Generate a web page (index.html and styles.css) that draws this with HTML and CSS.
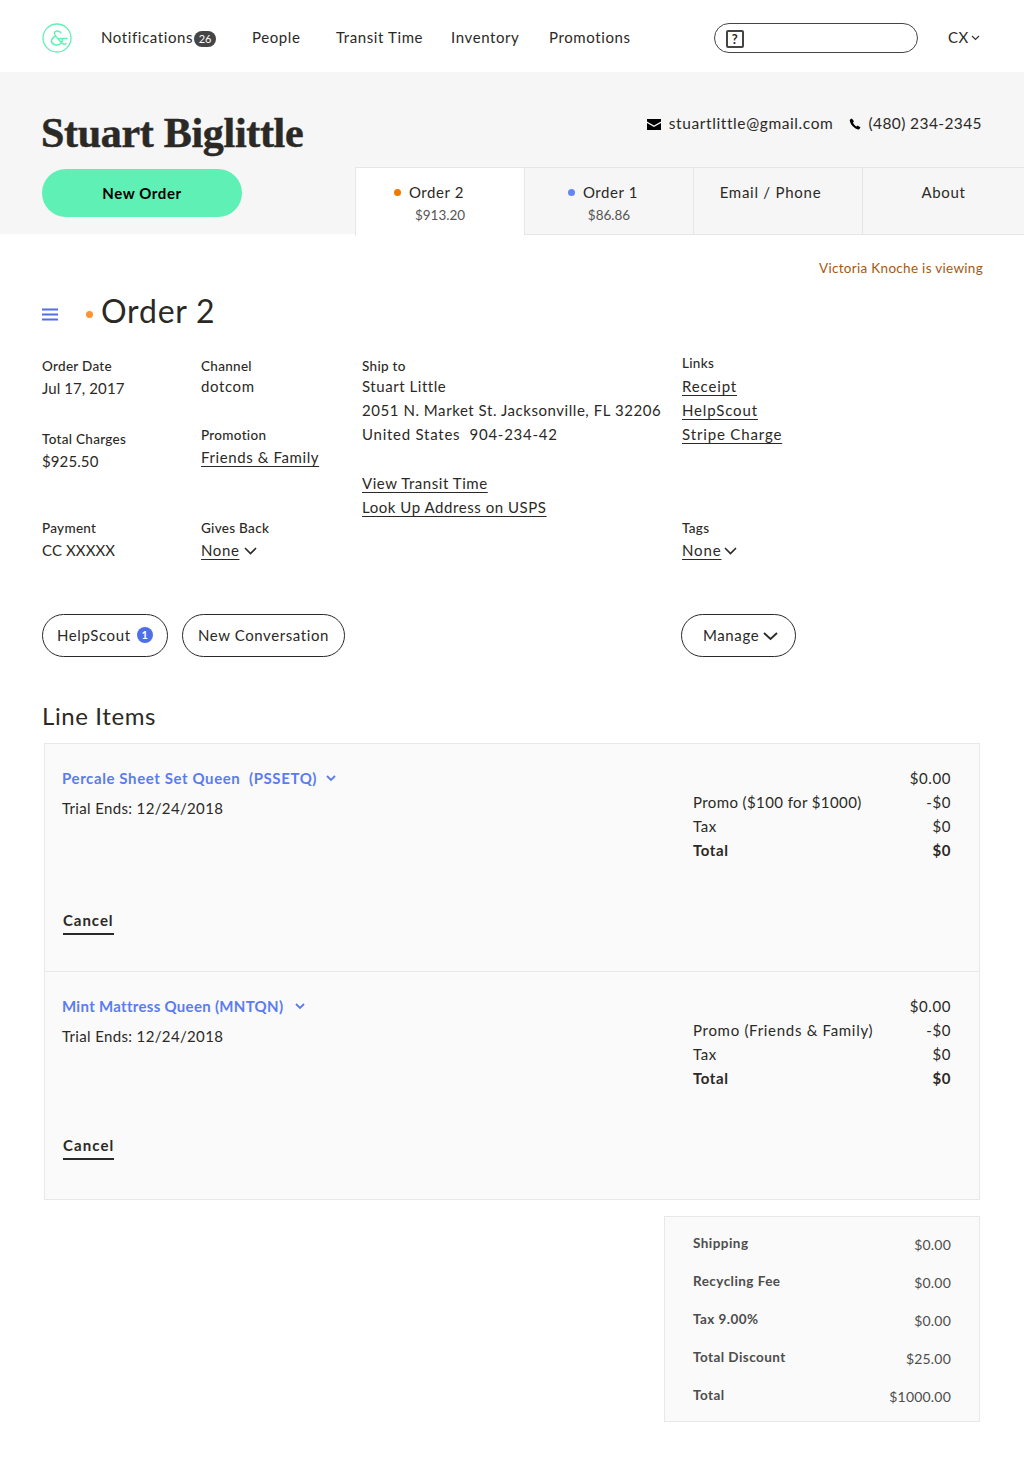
FILE: index.html
```html
<!DOCTYPE html>
<html lang="en">
<head>
    <meta charset="UTF-8">
    <title>Stuart Biglittle</title>
    <link rel="stylesheet" href="styles.css">
</head>
<body>
    <header class="topbar">
        <svg class="logo" width="30" height="30" viewBox="0 0 30 30">
            <circle cx="15" cy="15" r="14" fill="none" stroke="#5ff0b5" stroke-width="1.3"/>
            <path d="M19 10C18 7.500 13 7 12.500 10 12 12.500 17 17 20 20 21.500 21.500 23 21.500 24 20.500M17 15.500H25M20.500 15.500C21 19 18 22.500 14 22 10 21.500 8.500 18.500 10 16 11 14.500 12.500 13.500 14 13" fill="none" stroke="#5ff0b5" stroke-width="1.500" stroke-linecap="round"/>
        </svg>
        <nav class="mainnav">
            <a class="nav-notifications">Notifications<span class="count">26</span></a>
            <a class="nav-people">People</a>
            <a class="nav-transit">Transit Time</a>
            <a class="nav-inventory">Inventory</a>
            <a>Promotions</a>
        </nav>
        <div class="search">
            <span class="search-help">?</span>
        </div>
        <div class="team">CX<svg width="9" height="6" viewBox="0 0 9 6"><path d="M1 1l3.500 3.500L8 1" fill="none" stroke="#333" stroke-width="1.200"/></svg></div>
    </header>

    <section class="hero">
        <div class="hero-left">
            <h1>Stuart Biglittle</h1>
            <button class="new-order">New Order</button>
        </div>
        <div class="hero-right">
            <div class="contact">
                <svg class="icon-mail" width="14" height="11" viewBox="0 0 14 11"><path d="M0 0h14v2.500L7 6.500 0 2.500zM0 4l7 4 7-4v7H0z" fill="#000"/></svg>
                <span class="contact-mail">stuartlittle@gmail.com</span>
                <svg class="icon-phone" width="12" height="12" viewBox="0 0 12 12"><path d="M2.800.5L.8 1.800C.3 5.500 5.500 11.500 10 11.500l1.500-2-2.800-2-1.300 1C6 7.800 4.300 5.800 4 4.300l1-1z" fill="#000"/></svg>
                <span class="contact-phone">(480) 234-2345</span>
            </div>
            <div class="tabs">
                <div class="tab active">
                    <div class="tab-title title-order2"><i class="dot dot-orange"></i>Order 2</div>
                    <div class="tab-price">$913.20</div>
                </div>
                <div class="tab">
                    <div class="tab-title title-order1"><i class="dot dot-blue"></i>Order 1</div>
                    <div class="tab-price">$86.86</div>
                </div>
                <div class="tab"><div class="tab-title title-email">Email / Phone</div></div>
                <div class="tab tab-last"><div class="tab-title">About</div></div>
            </div>
        </div>
    </section>

    <main class="content">
        <div class="viewing">Victoria Knoche is viewing</div>
        <div class="order-title">
            <svg class="menu-icon" width="16" height="13" viewBox="0 0 16 13"><path d="M0 1.500h16M0 6.500h16M0 11.500h16" stroke="#4e6fe8" stroke-width="2"/></svg>
            <i class="dot-title"></i>
            <h2>Order 2</h2>
        </div>

        <div class="details">
            <div class="col col-1">
                <div class="label">Order Date</div>
                <div class="value value-date">Jul 17, 2017</div>
                <div class="label label-charges">Total Charges</div>
                <div class="value value-date">$925.50</div>
                <div class="label label-payment">Payment</div>
                <div class="value value-date">CC XXXXX</div>
            </div>
            <div class="col col-2">
                <div class="label">Channel</div>
                <div class="value">dotcom</div>
                <div class="label label-promo">Promotion</div>
                <div class="value value-date"><a>Friends &amp; Family</a></div>
                <div class="label label-gives">Gives Back</div>
                <div class="value value-date"><a>None</a><svg class="chev" width="13" height="8" viewBox="0 0 13 8"><path d="M1 1l5.500 5.500L12 1" fill="none" stroke="#2b2925" stroke-width="1.600"/></svg></div>
            </div>
            <div class="col col-3">
                <div class="label">Ship to</div>
                <div class="value">Stuart Little</div>
                <div class="value">2051 N. Market St. Jacksonville, FL 32206</div>
                <div class="value ship-country">United States&nbsp; 904-234-42</div>
                <div class="value link-first"><a>View Transit Time</a></div>
                <div class="value"><a>Look Up Address on USPS</a></div>
            </div>
            <div class="col col-4">
                <div class="label label-links">Links</div>
                <div class="value link-receipt"><a>Receipt</a></div>
                <div class="value"><a>HelpScout</a></div>
                <div class="value"><a>Stripe Charge</a></div>
                <div class="label label-tags">Tags</div>
                <div class="value value-date"><a>None</a><svg class="chev chev-tags" width="13" height="8" viewBox="0 0 13 8"><path d="M1 1l5.500 5.500L12 1" fill="none" stroke="#2b2925" stroke-width="1.600"/></svg></div>
            </div>
        </div>

        <div class="actions">
            <button class="pill pill-help">HelpScout<span class="badge">1</span></button>
            <button class="pill pill-new">New Conversation</button>
            <button class="pill pill-manage">Manage<svg width="15" height="9" viewBox="0 0 15 9"><path d="M1 1l6.500 6L14 1" fill="none" stroke="#2b2925" stroke-width="1.800"/></svg></button>
        </div>

        <h3 class="section-title">Line Items</h3>

        <div class="items">
            <div class="item">
                <div class="item-left">
                    <div class="item-name">Percale Sheet Set Queen&nbsp; (PSSETQ)<svg width="10" height="7" viewBox="0 0 10 7"><path d="M1 1l4 4 4-4" fill="none" stroke="#5b7cf0" stroke-width="1.800"/></svg></div>
                    <div class="trial">Trial Ends: 12/24/2018</div>
                    <a class="cancel cancel-one">Cancel</a>
                </div>
                <div class="item-right">
                    <div class="price-row"><span></span><span>$0.00</span></div>
                    <div class="price-row"><span class="promo-one">Promo ($100 for $1000)</span><span>-$0</span></div>
                    <div class="price-row"><span>Tax</span><span>$0</span></div>
                    <div class="price-row price-total"><span>Total</span><span>$0</span></div>
                </div>
            </div>
            <div class="item item-second">
                <div class="item-left">
                    <div class="item-name">Mint Mattress Queen (MNTQN)<svg width="10" height="7" viewBox="0 0 10 7"><path d="M1 1l4 4 4-4" fill="none" stroke="#5b7cf0" stroke-width="1.800"/></svg></div>
                    <div class="trial">Trial Ends: 12/24/2018</div>
                    <a class="cancel cancel-two">Cancel</a>
                </div>
                <div class="item-right">
                    <div class="price-row"><span></span><span>$0.00</span></div>
                    <div class="price-row"><span class="promo-two">Promo (Friends &amp; Family)</span><span>-$0</span></div>
                    <div class="price-row"><span>Tax</span><span>$0</span></div>
                    <div class="price-row price-total"><span>Total</span><span>$0</span></div>
                </div>
            </div>
        </div>

        <div class="summary">
            <div class="summary-row"><b>Shipping</b><span>$0.00</span></div>
            <div class="summary-row"><b>Recycling Fee</b><span>$0.00</span></div>
            <div class="summary-row"><b>Tax 9.00%</b><span>$0.00</span></div>
            <div class="summary-row"><b>Total Discount</b><span>$25.00</span></div>
            <div class="summary-row"><b>Total</b><span>$1000.00</span></div>
        </div>
    </main>
</body>
</html>
```
FILE: styles.css
```css
* {
    box-sizing: border-box;
}
body {
    margin: 0;
    min-height: 1463px;
    font-family: Lato, "Open Sans", sans-serif;
    font-size: 15px;
    letter-spacing: 0.6px;
    color: #2b2925;
    background: #fff;
}
a {
    color: inherit;
}
button {
    font-family: inherit;
    letter-spacing: inherit;
}

/* top bar */
.topbar {
    display: flex;
    align-items: center;
    height: 72px;
    padding: 4px 0 0 42px;
}
.logo {
    flex: none;
}
.mainnav {
    display: flex;
    width: 613px;
    margin: -2px 0 0 29px;
    font-size: 15px;
}
.nav-notifications {
    width: 151px;
}
.nav-people {
    width: 84px;
}
.nav-transit {
    width: 115px;
}
.nav-inventory {
    width: 98px;
}
.count {
    display: inline-block;
    width: 22px;
    height: 16px;
    margin-left: 1px;
    border-radius: 8px;
    background: #454545;
    color: #fff;
    font-size: 11px;
    line-height: 16px;
    text-align: center;
    letter-spacing: 0;
}
.search {
    display: flex;
    align-items: center;
    width: 204px;
    height: 30px;
    padding-left: 11px;
    border: 1px solid #444;
    border-radius: 15px;
}
.search-help {
    width: 18px;
    height: 18px;
    margin-top: 1px;
    border: 2px solid #444;
    border-radius: 2px;
    font-size: 13px;
    font-weight: 700;
    line-height: 14px;
    text-align: center;
}
.team {
    margin: -2px 0 0 30px;
    font-size: 15px;
}
.team svg {
    margin-left: 2px;
    vertical-align: 2px;
}

/* customer header */
.hero {
    display: flex;
    justify-content: space-between;
    height: 162px;
    background: #f6f6f6;
}
.hero-left {
    padding: 39px 0 0 42px;
}
h1 {
    margin: 0 0 0 -1px;
    font-family: "Liberation Serif", serif;
    font-size: 42px;
    line-height: 44px;
    font-weight: 700;
    letter-spacing: -0.3px;
    -webkit-text-stroke: 0.5px #2b2925;
    color: #2b2925;
}
.new-order {
    display: block;
    width: 200px;
    height: 48px;
    margin-top: 14px;
    border: 0;
    border-radius: 24px;
    background: #5ff0b5;
    color: #000;
    font-size: 15px;
    font-weight: 700;
}
.hero-right {
    width: 669px;
}
.contact {
    display: flex;
    justify-content: flex-end;
    align-items: center;
    gap: 8px;
    height: 95px;
    padding: 7px 42px 0 0;
    font-size: 15.500px;
}
.icon-mail {
    margin-top: 3px;
}
.icon-phone {
    margin: 1px -1px 0 0;
}
.contact-mail {
    margin-right: 8px;
}
.contact-phone {
    letter-spacing: 0.4px;
}
.tabs {
    display: flex;
    height: 68px;
    border-top: 1px solid #e6e6e6;
    border-bottom: 1px solid #e6e6e6;
}
.tab {
    width: 169px;
    padding-top: 14px;
    border-left: 1px solid #e6e6e6;
    text-align: center;
}
.tab.active {
    height: 68px;
    background: #fff;
}
.tab-last {
    width: 162px;
}
.tab-title {
    line-height: 20px;
}
.title-order2 {
    padding-right: 22px;
}
.title-order1 {
    padding-right: 12px;
}
.title-email {
    padding-right: 15px;
    letter-spacing: 0.75px;
}
.tab-price {
    margin-top: 3px;
    font-size: 13.500px;
    line-height: 20px;
    letter-spacing: 0;
    color: #555;
}
.dot {
    display: inline-block;
    width: 7px;
    height: 7px;
    margin-right: 8px;
    border-radius: 50%;
    vertical-align: 2px;
}
.dot-orange {
    background: #f07a00;
}
.dot-blue {
    background: #6685f5;
}

/* order */
.content {
    padding: 0 44px 0 42px;
}
.viewing {
    margin-right: -3px;
    padding-top: 25px;
    font-size: 13.500px;
    line-height: 18px;
    text-align: right;
    letter-spacing: 0.3px;
    color: #a8590f;
}
.order-title {
    display: flex;
    align-items: center;
    height: 44px;
    margin-top: 11px;
}
.menu-icon {
    margin-top: 8px;
}
.dot-title {
    width: 7px;
    height: 7px;
    margin: 8px 8px 0 28px;
    border-radius: 50%;
    background: #fb9434;
}
h2 {
    margin: 0;
    font-size: 32px;
    font-weight: 400;
    letter-spacing: 0.800px;
}

.details {
    display: grid;
    grid-template-columns: 159px 161px 320px 1fr;
    height: 235px;
    margin-top: 23px;
}
.col-1 .value {
    letter-spacing: 0.1px;
}
.col-3 .value {
    letter-spacing: 0.55px;
}
.col-3 .ship-country {
    letter-spacing: 0.75px;
}
.col-4 .value {
    letter-spacing: 0.85px;
}
.label {
    margin: 2px 0 -1px;
    font-size: 13.500px;
    line-height: 18px;
    letter-spacing: 0.3px;
    font-weight: 500;
}
.value {
    line-height: 24px;
    white-space: nowrap;
}
.value a {
    text-decoration: underline;
    text-underline-offset: 3px;
}
.value-date {
    margin-top: 2px;
}
.label-charges {
    margin-top: 30px;
}
.label-payment {
    margin-top: 46px;
}
.label-promo {
    margin-top: 28px;
}
.label-gives {
    margin-top: 50px;
}
.label-links {
    margin-top: -1px;
}
.link-receipt {
    margin-top: 3px;
}
.label-tags {
    margin-top: 73px;
}
.link-first {
    margin-top: 25px;
}
.chev {
    margin-left: 5px;
    vertical-align: 1px;
}
.chev-tags {
    margin-left: 3px;
}

.actions {
    display: flex;
    margin-top: 24px;
}
.pill {
    display: flex;
    align-items: center;
    height: 43px;
    padding: 0 0 2px;
    border: 1px solid #2b2925;
    border-radius: 22px;
    background: #fff;
    color: #2b2925;
    font-size: 15px;
}
.pill-help {
    width: 126px;
    padding-left: 14px;
}
.pill-new {
    justify-content: center;
    width: 163px;
    margin-left: 14px;
}
.pill-manage {
    width: 115px;
    margin-left: 336px;
    padding-left: 21px;
}
.pill-manage svg {
    margin: 3px 0 0 4px;
}
.badge {
    width: 16px;
    height: 16px;
    margin: 1px 0 0 6px;
    border-radius: 50%;
    background: #4e6fe8;
    color: #fff;
    font-size: 11px;
    line-height: 16px;
    letter-spacing: 0;
    font-weight: 700;
}

.section-title {
    margin: 43px 0 0;
    font-size: 24px;
    line-height: 32px;
    font-weight: 400;
    letter-spacing: 0.600px;
}

/* line items */
.items {
    width: 936px;
    margin: 11px 0 0 2px;
    border: 1px solid #e8e8e8;
    background: #fafafa;
}
.item {
    display: flex;
    justify-content: space-between;
    height: 227px;
    padding: 22px 28px 0 17px;
}
.item-second {
    height: 228px;
    border-top: 1px solid #e8e8e8;
}
.item-name {
    font-weight: 700;
    line-height: 24px;
    color: #5b7cf0;
}
.item-second .item-name {
    letter-spacing: 0.3px;
}
.item-name svg {
    margin-left: 9px;
    vertical-align: 2px;
}
.item-second .item-name svg {
    margin-left: 12px;
}
.trial {
    margin-top: 6px;
    line-height: 24px;
    letter-spacing: 0.35px;
}
.cancel {
    display: inline-block;
    margin: 89px 0 0 1px;
    padding-bottom: 2px;
    border-bottom: 2px solid #2b2925;
    font-weight: 700;
    line-height: 22px;
    letter-spacing: 0.950px;
}
.cancel-two {
    margin-top: 86px;
    letter-spacing: 1.100px;
}
.item-right {
    width: 258px;
}
.price-row {
    display: flex;
    justify-content: space-between;
    line-height: 24px;
}
.promo-one {
    letter-spacing: 0.4px;
}
.promo-two {
    letter-spacing: 0.7px;
}
.price-total {
    font-weight: 700;
}

/* totals */
.summary {
    width: 316px;
    height: 206px;
    margin: 16px 0 0 622px;
    padding: 8px 28px 0;
    border: 1px solid #e8e8e8;
    background: #fafafa;
    color: #4d4d4d;
}
.summary-row {
    display: flex;
    justify-content: space-between;
    align-items: center;
    height: 38px;
    font-size: 14px;
    letter-spacing: 0.2px;
}
.summary-row b {
    margin-top: -3px;
    font-size: 13.500px;
    letter-spacing: 0.45px;
}
```
